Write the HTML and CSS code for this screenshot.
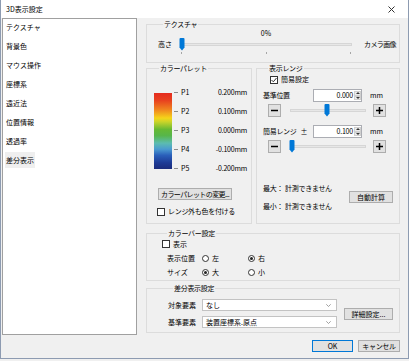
FILE: index.html
```html
<!DOCTYPE html>
<html lang="ja">
<head>
    <meta charset="UTF-8">
    <meta name="viewport" content="width=device-width, initial-scale=1.0">
    <title>3D表示設定</title>
    <link rel="stylesheet" href="styles.css">
</head>
<body>

<div class="window">

    <!-- Title Bar -->
    <div class="titlebar">
        <span class="title">3D表示設定</span>
        <svg class="close" width="7" height="7" viewBox="0 0 7 7"><path d="M0.5 0.5 L6.5 6.5 M6.5 0.5 L0.5 6.5" stroke="#333" stroke-width="1"/></svg>
    </div>

    <div class="main">

        <!-- Category List -->
        <ul class="nav">
            <li><span>テクスチャ</span></li>
            <li><span>背景色</span></li>
            <li><span>マウス操作</span></li>
            <li><span>座標系</span></li>
            <li><span>遠近法</span></li>
            <li><span>位置情報</span></li>
            <li><span>透過率</span></li>
            <li class="selected"><span>差分表示</span></li>
        </ul>

        <div class="content">

            <!-- Texture -->
            <fieldset class="group texture">
                <legend>テクスチャ</legend>
                <div class="texture-grid">
                    <span class="percent">0%</span>
                    <span class="tex-left">高さ</span>
                    <div class="slider tex-slider">
                        <div class="track"></div>
                        <svg class="thumb" style="left: 1px" width="6" height="13" viewBox="0 0 6 13"><path d="M0.5 1 Q0.5 0 1.5 0 H4.5 Q5.5 0 5.5 1 V9.5 L3 12.5 L0.5 9.5 Z" fill="#0078d7"/></svg>
                    </div>
                    <span class="tex-right">カメラ画像</span>
                    <div class="ticks"><i></i><i></i><i></i></div>
                </div>
            </fieldset>

            <div class="pair">

                <!-- Color Palette -->
                <fieldset class="group palette">
                    <legend>カラーパレット</legend>
                    <div class="scale">
                        <div class="bar"></div>
                        <div class="scale-labels">
                            <div class="scale-row"><i class="dash"></i><span class="point">P1</span><span class="value">0.200mm</span></div>
                            <div class="scale-row"><i class="dash"></i><span class="point">P2</span><span class="value">0.100mm</span></div>
                            <div class="scale-row"><i class="dash"></i><span class="point">P3</span><span class="value">0.000mm</span></div>
                            <div class="scale-row"><i class="dash"></i><span class="point">P4</span><span class="value">-0.100mm</span></div>
                            <div class="scale-row"><i class="dash"></i><span class="point">P5</span><span class="value">-0.200mm</span></div>
                        </div>
                    </div>
                    <button class="btn palette-btn">カラーパレットの変更...</button>
                    <label class="check"><span class="box"></span>レンジ外も色を付ける</label>
                </fieldset>

                <!-- Display Range -->
                <fieldset class="group range">
                    <legend>表示レンジ</legend>
                    <label class="check simple"><span class="box"><svg width="6" height="6" viewBox="0 0 6 6"><path d="M0.5 3 L2.3 4.8 L5.5 1" fill="none" stroke="#333" stroke-width="1"/></svg></span>簡易設定</label>

                    <div class="num-row">
                        <span class="num-label">基準位置</span>
                        <div class="spin"><span class="spin-value">0.000</span><span class="spin-btns"><i class="up"></i><i class="down"></i></span></div>
                        <span class="unit">mm</span>
                    </div>
                    <div class="step-row">
                        <button class="step"><svg width="7" height="7" viewBox="0 0 7 7"><path d="M0 3.5 H7" stroke="#000" stroke-width="1.5"/></svg></button>
                        <div class="slider range-slider">
                            <div class="track"></div>
                            <svg class="thumb" style="left: 37px" width="6" height="13" viewBox="0 0 6 13"><path d="M0.5 1 Q0.5 0 1.5 0 H4.5 Q5.5 0 5.5 1 V9.5 L3 12.5 L0.5 9.5 Z" fill="#0078d7"/></svg>
                        </div>
                        <button class="step"><svg width="7" height="7" viewBox="0 0 7 7"><path d="M0 3.5 H7 M3.5 0 V7" stroke="#000" stroke-width="1.5"/></svg></button>
                    </div>

                    <div class="num-row second">
                        <span class="num-label">簡易レンジ<span class="pm">±</span></span>
                        <div class="spin"><span class="spin-value">0.100</span><span class="spin-btns"><i class="up"></i><i class="down"></i></span></div>
                        <span class="unit">mm</span>
                    </div>
                    <div class="step-row">
                        <button class="step"><svg width="7" height="7" viewBox="0 0 7 7"><path d="M0 3.5 H7" stroke="#000" stroke-width="1.5"/></svg></button>
                        <div class="slider range-slider">
                            <div class="track"></div>
                            <svg class="thumb" style="left: 2px" width="6" height="13" viewBox="0 0 6 13"><path d="M0.5 1 Q0.5 0 1.5 0 H4.5 Q5.5 0 5.5 1 V9.5 L3 12.5 L0.5 9.5 Z" fill="#0078d7"/></svg>
                        </div>
                        <button class="step"><svg width="7" height="7" viewBox="0 0 7 7"><path d="M0 3.5 H7 M3.5 0 V7" stroke="#000" stroke-width="1.5"/></svg></button>
                    </div>

                    <div class="measure">
                        <div class="measure-lines">
                            <div class="line"><span class="measure-label">最大：</span>計測できません</div>
                            <div class="line"><span class="measure-label">最小：</span>計測できません</div>
                        </div>
                        <button class="btn auto">自動計算</button>
                    </div>
                </fieldset>
            </div>

            <!-- Color Bar -->
            <fieldset class="group colorbar">
                <legend>カラーバー設定</legend>
                <div class="colorbar-grid">
                    <label class="check show"><span class="box"></span>表示</label>
                    <span class="cb-label">表示位置</span>
                    <label class="radio-opt"><span class="radio"></span>左</label>
                    <label class="radio-opt"><span class="radio on"></span>右</label>
                    <span class="cb-label">サイズ</span>
                    <label class="radio-opt"><span class="radio on"></span>大</label>
                    <label class="radio-opt"><span class="radio"></span>小</label>
                </div>
            </fieldset>

            <!-- Difference Display -->
            <fieldset class="group diff">
                <legend>差分表示設定</legend>
                <div class="diff-body">
                    <div class="diff-fields">
                        <span class="field-label">対象要素</span>
                        <div class="select"><span>なし</span><svg width="5" height="3" viewBox="0 0 5 3"><path d="M0.3 0.3 L2.5 2.5 L4.7 0.3" fill="none" stroke="#888" stroke-width="0.8"/></svg></div>
                        <span class="field-label">基準要素</span>
                        <div class="select"><span>装置座標系.原点</span><svg width="5" height="3" viewBox="0 0 5 3"><path d="M0.3 0.3 L2.5 2.5 L4.7 0.3" fill="none" stroke="#888" stroke-width="0.8"/></svg></div>
                    </div>
                    <button class="btn detail">詳細設定...</button>
                </div>
            </fieldset>
        </div>
    </div>

    <!-- Dialog Buttons -->
    <div class="footer">
        <button class="btn ok">OK</button>
        <button class="btn cancel">キャンセル</button>
    </div>
</div>

</body>
</html>
```

FILE: styles.css
```css
/* General */
* {
    box-sizing: border-box;
}

body {
    margin: 0;
    font-family: "Noto Sans CJK JP", "Noto Sans", sans-serif;
    font-size: 7px;
    line-height: 9px;
    color: #000;
    background: #f0f0f0;
}

/* Window */
.window {
    width: 409px;
    height: 359px;
    background: #f0f0f0;
    border: 1px solid #8d9bb1;
    border-top: none;
}

.titlebar {
    height: 18px;
    background: #fff;
    display: flex;
    align-items: center;
    justify-content: space-between;
    padding: 0 13px 0 5px;
}

.main {
    display: flex;
    align-items: flex-start;
    padding: 0 8px 0 1px;
}

/* Category List */
.nav {
    list-style: none;
    margin: 0;
    padding: 0;
    width: 135px;
    height: 317px;
    background: #fff;
    border: 1px solid #a0a0a0;
}

.nav li {
    height: 19px;
    padding-left: 2px;
}

.nav li span {
    display: inline-block;
    line-height: 16px;
    padding: 0 1px;
}

.nav li.selected span {
    background: #efefef;
}

.content {
    width: 254px;
    margin-left: 9px;
    margin-top: 2px;
}

/* Group boxes */
.group {
    margin: 0;
    padding: 0;
    border: 1px solid #dcdcdc;
    min-width: 0;
}

.group legend {
    padding: 0 1px;
    margin-left: 5px;
    line-height: 9px;
    letter-spacing: -0.3px;
}

/* Texture */
.texture {
    height: 43px;
    padding-left: 11px;
}

.texture-grid {
    display: grid;
    grid-template-columns: 20px 176px auto;
    grid-template-rows: 9px 13px 3px;
    align-items: center;
}

.percent {
    grid-column: 2;
    grid-row: 1;
    text-align: center;
}

.tex-left {
    grid-column: 1;
    grid-row: 2;
}

.tex-slider {
    grid-column: 2;
    grid-row: 2;
}

.tex-right {
    grid-column: 3;
    grid-row: 2;
    padding-left: 10px;
    letter-spacing: -0.6px;
    white-space: nowrap;
}

.ticks {
    grid-column: 2;
    grid-row: 3;
    display: flex;
    justify-content: space-between;
    padding: 0 3px;
    height: 3px;
    align-items: flex-end;
}

.ticks i {
    width: 1px;
    height: 2px;
    background: #a6a6a6;
}

/* Sliders */
.slider {
    position: relative;
    height: 13px;
}

.slider .track {
    position: absolute;
    left: 3px;
    right: 2px;
    top: 5px;
    height: 3px;
    background: #e7e7e7;
    border: 1px solid #d6d6d6;
}

.slider .thumb {
    position: absolute;
    top: 0;
}

.pair {
    display: flex;
    gap: 4px;
    margin-top: 1px;
}

/* Color Palette */
.palette {
    width: 106px;
    height: 160px;
    padding: 10px 4px 0 7px;
}

.scale {
    display: flex;
}

.bar {
    width: 18px;
    margin: 9.5px 0;
    background: linear-gradient(to bottom,
        #e52b1e 0%, #e8421f 10%, #f0851f 22%, #f5d51a 33%, #c8d42a 38%,
        #66b934 48%, #57b64a 56%, #5cbcb0 66%, #4a9ad0 74%, #2a5fba 82%,
        #1d3a95 92%, #1b2c7c 100%);
}

.scale-labels {
    flex: 1;
    margin-left: 2px;
}

.scale-row {
    height: 19px;
    display: flex;
    align-items: center;
}

.dash {
    width: 4px;
    height: 1px;
    background: #8c8c8c;
    margin-right: 3px;
}

.point {
    flex: 1;
}

.value {
    text-align: right;
    letter-spacing: -0.2px;
}

/* Buttons */
.btn {
    font: inherit;
    line-height: 10px;
    height: 12px;
    padding: 0;
    color: #000;
    background: #e1e1e1;
    border: 1px solid #adadad;
    white-space: nowrap;
    overflow: hidden;
}

.palette-btn {
    display: block;
    width: 74px;
    margin: 10px 0 0 4px;
    letter-spacing: -0.6px;
}

/* Checkbox & radio */
.check {
    display: flex;
    align-items: center;
    height: 9px;
    white-space: nowrap;
}

.box {
    width: 8px;
    height: 8px;
    border: 1px solid #333;
    background: #fff;
    margin-right: 3px;
    display: flex;
    align-items: center;
    justify-content: center;
}

.palette .check {
    margin: 7px 0 0 3px;
    letter-spacing: -0.3px;
}

/* Display Range */
.range {
    width: 144px;
    height: 160px;
    padding: 0 6px;
}

.range .simple {
    margin: 2px 0 0 7px;
}

.num-row {
    display: flex;
    align-items: center;
    height: 13px;
    margin-top: 5px;
}

.num-row.second {
    margin-top: 8px;
}

.num-label {
    width: 50px;
    display: flex;
    white-space: nowrap;
    letter-spacing: -0.3px;
}

.pm {
    margin-left: 4px;
}

.spin {
    width: 49px;
    height: 13px;
    border: 1px solid #abadb3;
    background: #fff;
    display: flex;
}

.spin-value {
    flex: 1;
    text-align: right;
    padding-right: 1px;
    line-height: 11px;
    letter-spacing: -0.2px;
}

.spin-btns {
    width: 7px;
    display: flex;
    flex-direction: column;
    padding: 1px 0;
}

.spin-btns i {
    flex: 1;
    display: flex;
    align-items: center;
    justify-content: center;
    background: #ececec;
    border: 1px solid #d0d0d0;
}

.spin-btns i::before {
    content: "";
    border-left: 2px solid transparent;
    border-right: 2px solid transparent;
}

.spin-btns .up::before {
    border-bottom: 2px solid #333;
}

.spin-btns .down::before {
    border-top: 2px solid #333;
}

.unit {
    margin-left: 8px;
}

.step-row {
    display: flex;
    align-items: center;
    margin-top: 2px;
    padding-left: 5px;
}

.step {
    width: 13px;
    height: 13px;
    padding: 0;
    background: #e1e1e1;
    border: 1px solid #adadad;
    display: flex;
    align-items: center;
    justify-content: center;
}

.range-slider {
    width: 81px;
    margin: 0 5px 0 6px;
}

.measure {
    display: flex;
    align-items: center;
    margin-top: 26px;
}

.measure-lines .line {
    height: 18px;
    line-height: 18px;
    white-space: nowrap;
    letter-spacing: -0.3px;
}

.measure-label {
    margin-right: 2px;
}

.auto {
    width: 44px;
    margin-left: auto;
}

/* Color Bar */
.colorbar {
    height: 52px;
    margin-top: 5px;
    padding-left: 15px;
}

.colorbar-grid {
    margin-top: -1px;
    display: grid;
    grid-template-columns: 40px 46px auto;
    grid-template-rows: repeat(3, 14px);
    align-items: center;
}

.colorbar .show {
    grid-column: 1 / 4;
}

.cb-label {
    padding-left: 5px;
    white-space: nowrap;
}

.radio-opt {
    display: flex;
    align-items: center;
}

.radio {
    width: 7px;
    height: 7px;
    border: 1px solid #333;
    border-radius: 50%;
    background: #fff;
    margin-right: 3px;
    display: flex;
    align-items: center;
    justify-content: center;
}

.radio.on::after {
    content: "";
    width: 3px;
    height: 3px;
    border-radius: 50%;
    background: #222;
}

/* Difference Display */
.diff {
    height: 49px;
    margin-top: 3px;
    padding: 6px 0 0 21px;
}

.diff-body {
    display: flex;
    align-items: center;
}

.diff-fields {
    display: grid;
    grid-template-columns: 34px 135px;
    grid-template-rows: 12px 12px;
    row-gap: 5px;
    align-items: center;
}

.field-label {
    white-space: nowrap;
}

.select {
    height: 12px;
    border: 1px solid #c3c3c3;
    background: #fff;
    display: flex;
    align-items: center;
    justify-content: space-between;
    padding: 0 5px 0 3px;
}

.detail {
    width: 49px;
    margin-left: 7px;
}

/* Dialog Buttons */
.footer {
    display: flex;
    justify-content: flex-end;
    gap: 5px;
    margin-top: 5px;
    padding-right: 8px;
}

.footer .btn {
    width: 41px;
}

.footer .cancel {
    width: 42px;
    letter-spacing: -0.3px;
}

.ok {
    border-color: #0078d7;
}
```
